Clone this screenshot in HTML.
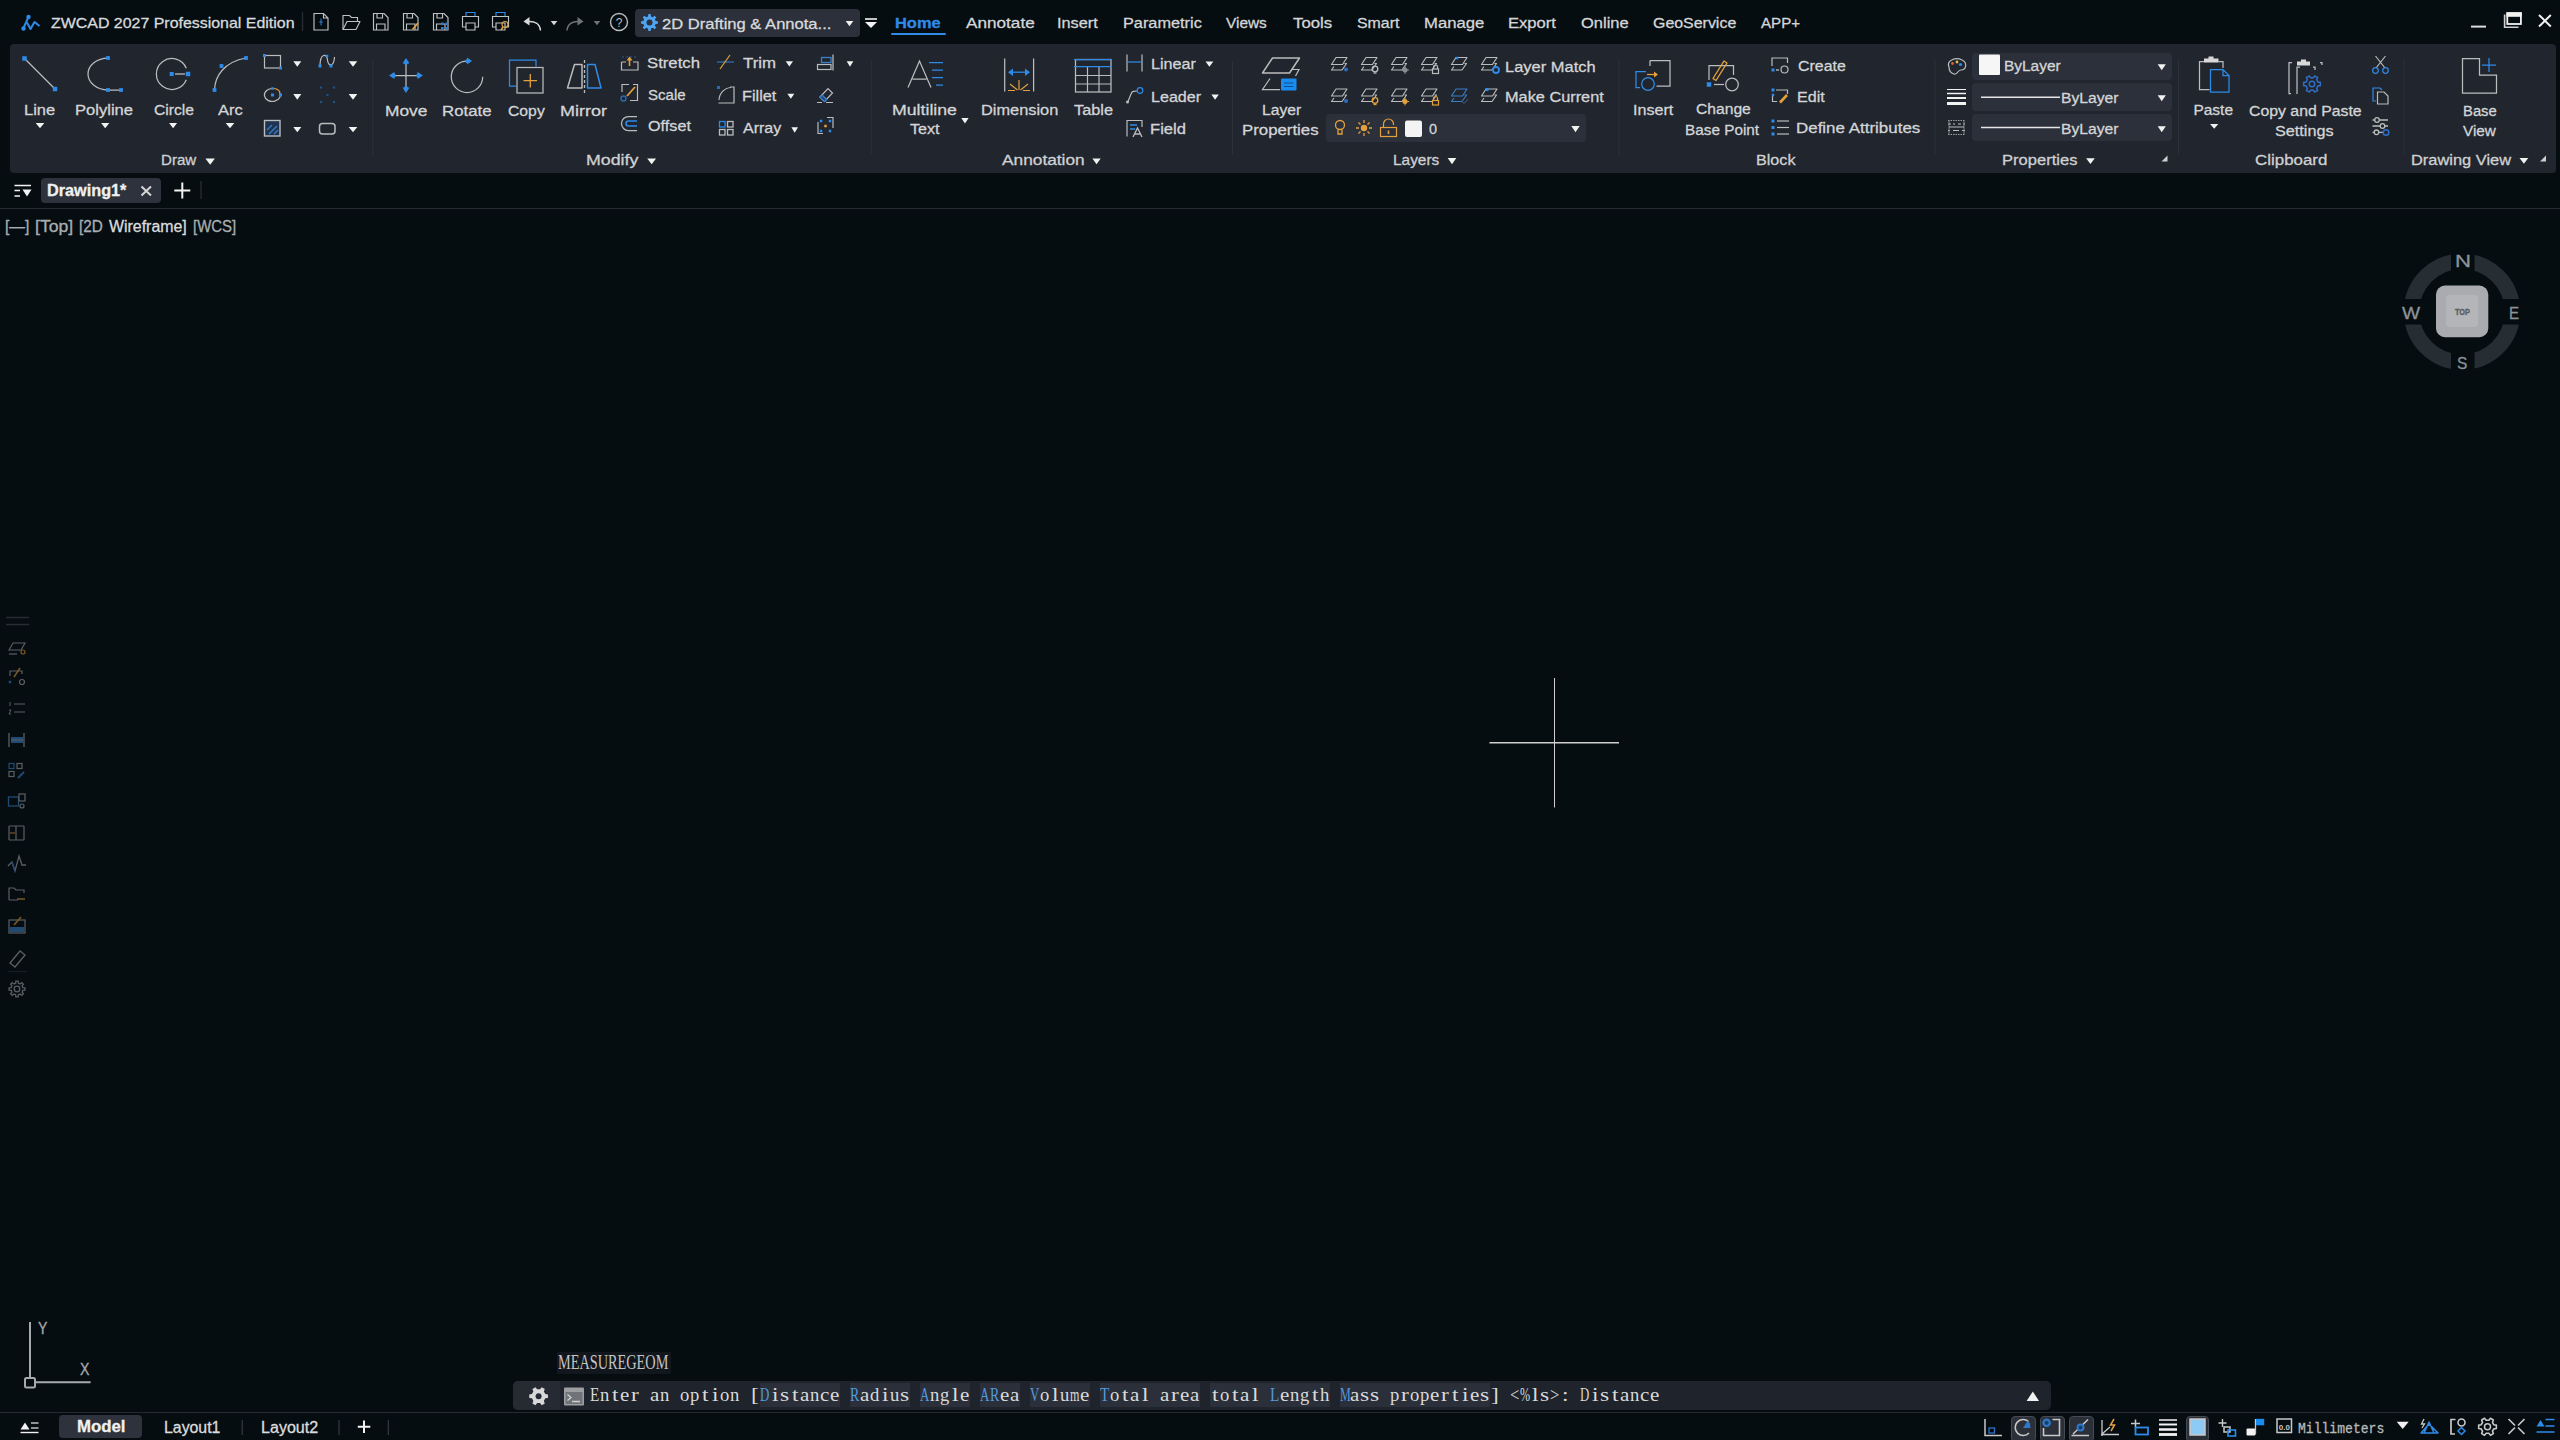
<!DOCTYPE html>
<html><head><meta charset="utf-8"><title>ZWCAD 2027</title>
<style>
html,body{margin:0;padding:0;}
body{width:2560px;height:1440px;overflow:hidden;background:#050d10;position:relative;font-family:"Liberation Sans",sans-serif;}
.t{position:absolute;white-space:pre;line-height:1;transform-origin:0 0;-webkit-text-stroke:0.3px currentColor;}
.bx{position:absolute;}
.ob{position:absolute;top:1383px;height:24px;background:#2a2f39;}
.cc{position:absolute;white-space:pre;line-height:1;font-family:"Liberation Serif",serif;font-size:19.5px;color:#d9d9d9;transform:scaleX(0.8);transform-origin:0 0;}
svg{position:absolute;left:0;top:0;}

</style></head><body>
<div class="bx" style="left:10px;top:44px;width:2546px;height:129px;background:#21252d;border-radius:4px;"></div>
<div class="bx" style="left:635px;top:9px;width:225px;height:28px;background:#2c303a;border-radius:4px;"></div>
<div class="bx" style="left:891px;top:33px;width:55px;height:2px;background:#2f8ae8;border-radius:1px;"></div>
<div class="bx" style="left:1326px;top:114px;width:260px;height:28px;background:#2c303a;border-radius:4px;"></div>
<div class="bx" style="left:1972px;top:53px;width:200px;height:27px;background:#2c303a;border-radius:4px;"></div>
<div class="bx" style="left:1972px;top:83px;width:200px;height:28px;background:#2c303a;border-radius:4px;"></div>
<div class="bx" style="left:1972px;top:114px;width:200px;height:27px;background:#2c303a;border-radius:4px;"></div>
<div class="bx" style="left:41px;top:178px;width:120px;height:25px;background:#2d323c;border-radius:4px;"></div>
<div class="bx" style="left:0;top:208px;width:2560px;height:1px;background:#262b31;"></div>
<div class="bx" style="left:557px;top:1352px;width:114px;height:22px;background:#12171d;"></div>
<div class="bx" style="left:513px;top:1381px;width:1538px;height:29px;background:#1f232b;border-radius:5px;"></div>
<div class="bx" style="left:513px;top:1381px;width:47px;height:29px;background:#262a33;border-radius:5px 0 0 5px;"></div>
<div class="bx" style="left:0;top:1412px;width:2560px;height:1px;background:#242a2f;"></div>
<div class="bx" style="left:59px;top:1415px;width:83px;height:23px;background:#2d323c;border-radius:4px;"></div>
<div class="bx" style="left:2011px;top:1415.5px;width:25px;height:26px;box-sizing:border-box;background:#2b2f37;border:1.5px solid #454a53;border-radius:4px;"></div>
<div class="bx" style="left:2040px;top:1415.5px;width:25px;height:26px;box-sizing:border-box;background:#2b2f37;border:1.5px solid #454a53;border-radius:4px;"></div>
<div class="bx" style="left:2069px;top:1415.5px;width:25px;height:26px;box-sizing:border-box;background:#2b2f37;border:1.5px solid #454a53;border-radius:4px;"></div>
<div class="bx" style="left:2186px;top:1415.5px;width:23px;height:26px;box-sizing:border-box;background:#2b2f37;border:1.5px solid #454a53;border-radius:4px;"></div>

<svg width="2560" height="1440" viewBox="0 0 2560 1440" stroke-linecap="butt"><path d="M28.5 17 L23.5 28" stroke="#2f8be8" stroke-width="2" fill="none" /><circle cx="28.5" cy="17" r="2.2" stroke="none" stroke-width="0" fill="#2f8be8" /><circle cx="23.5" cy="28.5" r="2.2" stroke="none" stroke-width="0" fill="#2f8be8" /><path d="M27 22.5 L30.5 29 L34.5 22 L39.5 26" stroke="#2f8be8" stroke-width="2" fill="none" stroke-linejoin="round"/><path d="M302.5 12 V31" stroke="#262b31" stroke-width="1.5" fill="none" /><path d="M314 13.5 H323.5 L328 18 V30 H314 Z M323.5 13.5 V18 H328" stroke="#bfc0c2" stroke-width="1.15" fill="none" /><path d="M321 18.5 V25.5 M319.2 22 H322.8" stroke="#2f7fd8" stroke-width="1" fill="none" /><path d="M343 29.5 V15.5 H349.5 L351.5 17.5 H357.5 V21" stroke="#bfc0c2" stroke-width="1.15" fill="none" /><path d="M343 29.5 L347 21.5 H360 L356 29.5 Z" stroke="#bfc0c2" stroke-width="1.15" fill="none" stroke-linejoin="round"/><path d="M373.5 13.5 H384.0 L388.0 17.5 V30 H373.5 Z" stroke="#bfc0c2" stroke-width="1.15" fill="none" /><path d="M377.0 13.5 V18 H382.5 V13.5 M376.5 30 V24 H385.0 V30" stroke="#bfc0c2" stroke-width="1.15" fill="none" /><path d="M403.5 13.5 H414.0 L418.0 17.5 V30 H403.5 Z" stroke="#bfc0c2" stroke-width="1.15" fill="none" /><path d="M407.0 13.5 V18 H412.5 V13.5 M406.5 30 V24 H415.0 V30" stroke="#bfc0c2" stroke-width="1.15" fill="none" /><path d="M412.5 29.5 L418.0 23" stroke="#e3a13c" stroke-width="1.8" fill="none" /><path d="M433.5 13.5 H444.0 L448.0 17.5 V30 H433.5 Z" stroke="#bfc0c2" stroke-width="1.15" fill="none" /><path d="M437.0 13.5 V18 H442.5 V13.5 M436.5 30 V24 H445.0 V30" stroke="#bfc0c2" stroke-width="1.15" fill="none" /><rect x="441.0" y="22.5" width="2.6" height="2.6" rx="0" fill="#2f7fd8"/><rect x="441.0" y="27.0" width="2.6" height="2.6" rx="0" fill="#2f7fd8"/><rect x="445.5" y="22.5" width="2.6" height="2.6" rx="0" fill="#2f7fd8"/><rect x="445.5" y="27.0" width="2.6" height="2.6" rx="0" fill="#2f7fd8"/><path d="M466 16 V12.5 H475 V16" stroke="#2f8be8" stroke-width="1.15" fill="none" /><path d="M466 27 H462.5 V16.5 H478.5 V27 H475" stroke="#bfc0c2" stroke-width="1.15" fill="none" /><path d="M466 23 H475 V30 H466 Z" stroke="#bfc0c2" stroke-width="1.15" fill="none" /><path d="M496 16 V12.5 H505 V16" stroke="#2f8be8" stroke-width="1.15" fill="none" /><path d="M496 27 H492.5 V16.5 H508.5 V27 H505" stroke="#bfc0c2" stroke-width="1.15" fill="none" /><path d="M496 23 H505 V30 H496 Z" stroke="#bfc0c2" stroke-width="1.15" fill="none" /><circle cx="505" cy="24.5" r="3" stroke="#e3a13c" stroke-width="1.15" fill="none" /><path d="M503 27 L501 30" stroke="#e3a13c" stroke-width="1.6" fill="none" /><path d="M528 21.5 C535 21 540 24 540.5 30.5" stroke="#d8d8d8" stroke-width="1.5" fill="none" /><path d="M523.5 21.5 L529.5 17 L529.5 25.5 Z" fill="#d8d8d8"/><path d="M550.7 21 H557.3 L554.0 25.3 Z" fill="#d8d8d8"/><path d="M579 21.5 C572.5 21 567.5 24 567 30.5" stroke="#6f7377" stroke-width="1.5" fill="none" /><path d="M583.5 21.5 L577.5 17 L577.5 25.5 Z" fill="#6f7377"/><path d="M593.7 21 H600.3 L597.0 25.3 Z" fill="#6f7377"/><circle cx="619" cy="22" r="8.5" stroke="#babcbe" stroke-width="1.4" fill="none" /><text x="619" y="26.5" font-family="Liberation Sans" font-size="12" font-weight="normal" fill="#babcbe" text-anchor="middle">?</text><path d="M655.62 21.03 L657.92 21.30 L657.92 23.70 L655.62 23.97 L654.86 25.79 L656.30 27.60 L654.60 29.30 L652.79 27.86 L650.97 28.62 L650.70 30.92 L648.30 30.92 L648.03 28.62 L646.21 27.86 L644.40 29.30 L642.70 27.60 L644.14 25.79 L643.38 23.97 L641.08 23.70 L641.08 21.30 L643.38 21.03 L644.14 19.21 L642.70 17.40 L644.40 15.70 L646.21 17.14 L648.03 16.38 L648.30 14.08 L650.70 14.08 L650.97 16.38 L652.79 17.14 L654.60 15.70 L656.30 17.40 L654.86 19.21 Z" fill="#4ea4f0"/><circle cx="649.5" cy="22.5" r="3" stroke="none" stroke-width="0" fill="#2c303a" /><path d="M845.7 21 H853.3 L849.5 26.3 Z" fill="#f2f2f2"/><path d="M865 19 H877" stroke="#f2f2f2" stroke-width="1.6" fill="none" /><path d="M865 22 H877 L871 28 Z" fill="#f2f2f2"/><path d="M2471 26.6 H2486" stroke="#dcdcdc" stroke-width="2" fill="none" /><rect x="2507.3" y="13.2" width="13.6" height="10.8" rx="0" stroke="#f2f2f2" stroke-width="1.8" fill="none"/><rect x="2506.4" y="12.3" width="15.4" height="4.5" rx="0" fill="#f2f2f2"/><path d="M2504.6 14.5 V27.2 H2518.5" stroke="#cfcfcf" stroke-width="1.6" fill="none" /><path d="M2539 15 L2550.8 26.5 M2550.8 15 L2539 26.5" stroke="#f2f2f2" stroke-width="2" fill="none" /><path d="M372.8 60 V155" stroke="#2c3138" stroke-width="1" fill="none" /><path d="M871.7 60 V154" stroke="#2c3138" stroke-width="1" fill="none" /><path d="M1232.5 61 V155" stroke="#2c3138" stroke-width="1" fill="none" /><path d="M1619 59.5 V155" stroke="#2c3138" stroke-width="1" fill="none" /><path d="M1935 59 V154" stroke="#2c3138" stroke-width="1" fill="none" /><path d="M2178.5 59 V154" stroke="#2c3138" stroke-width="1" fill="none" /><path d="M2404 59 V154" stroke="#2c3138" stroke-width="1" fill="none" /><path d="M24.5 58.5 L55 89" stroke="#babcbe" stroke-width="1.25" fill="none" /><rect x="22.25" y="56.25" width="4.5" height="4.5" rx="0" fill="#2f8be8"/><rect x="52.75" y="86.75" width="4.5" height="4.5" rx="0" fill="#2f8be8"/><path d="M35.7 123 H44.3 L40.0 128.3 Z" fill="#f2f2f2"/><path d="M108 58 A20 16 0 0 0 108 90 L121 90" stroke="#babcbe" stroke-width="1.25" fill="none" /><rect x="106.1" y="56.1" width="3.8" height="3.8" rx="0" fill="#2f8be8"/><rect x="106.1" y="88.1" width="3.8" height="3.8" rx="0" fill="#2f8be8"/><rect x="119.1" y="88.1" width="3.8" height="3.8" rx="0" fill="#2f8be8"/><path d="M101.10000000000001 123 H109.3 L105.2 128.3 Z" fill="#f2f2f2"/><path d="M186.3 68.3 A15.5 15.5 0 1 0 186.3 79.7" stroke="#babcbe" stroke-width="1.25" fill="none" /><path d="M175 74 H185" stroke="#babcbe" stroke-width="1.3" fill="none" /><rect x="169.7" y="72.0" width="4" height="4" rx="0" fill="#2f8be8"/><rect x="185.75" y="71.75" width="4.5" height="4.5" rx="0" fill="#2f8be8"/><path d="M169.1 123 H177.10000000000002 L173.10000000000002 128.3 Z" fill="#f2f2f2"/><path d="M214.5 90 C215 76 224 62 246 58" stroke="#babcbe" stroke-width="1.25" fill="none" /><rect x="212.6" y="88.1" width="3.8" height="3.8" rx="0" fill="#2f8be8"/><rect x="219.6" y="64.1" width="3.8" height="3.8" rx="0" fill="#2f8be8"/><rect x="244.1" y="56.1" width="3.8" height="3.8" rx="0" fill="#2f8be8"/><path d="M225.7 123 H234.3 L230.0 128.3 Z" fill="#f2f2f2"/><rect x="264.5" y="55.5" width="16" height="12.5" rx="0" stroke="#babcbe" stroke-width="1.2" fill="none"/><rect x="263.0" y="54.0" width="3" height="3" rx="0" fill="#2f8be8"/><rect x="279.0" y="66.5" width="3" height="3" rx="0" fill="#2f8be8"/><path d="M293.3 61.3 H301.3 L297.3 66.8 Z" fill="#f2f2f2"/><path d="M320 66 C320 53 327 53 327.5 60 C328 67 334 67 334.5 57" stroke="#babcbe" stroke-width="1.2" fill="none" /><rect x="318.5" y="64.5" width="3" height="3" rx="0" fill="#2f8be8"/><rect x="325.75" y="54.75" width="2.5" height="2.5" rx="0" fill="#2f8be8"/><rect x="329.5" y="64.5" width="3" height="3" rx="0" fill="#2f8be8"/><path d="M348.7 61.3 H357.3 L353.0 66.8 Z" fill="#f2f2f2"/><path d="M279.5 92 A8 6.5 0 1 1 273 88.5" stroke="#babcbe" stroke-width="1.2" fill="none" /><path d="M273.5 88.5 A8 6.5 0 0 1 280 92" stroke="#e3a13c" stroke-width="1.2" fill="none" /><rect x="271.0" y="93.5" width="3" height="3" rx="0" fill="#2f8be8"/><rect x="279.0" y="93.5" width="3" height="3" rx="0" fill="#2f8be8"/><rect x="271.25" y="87.25" width="2.5" height="2.5" rx="0" fill="#2f8be8"/><path d="M293.3 94 H301.3 L297.3 99.8 Z" fill="#f2f2f2"/><rect x="319.9" y="86.4" width="2.2" height="2.2" rx="0" fill="#1f4f86"/><rect x="332.9" y="86.4" width="2.2" height="2.2" rx="0" fill="#1f4f86"/><rect x="326.4" y="93.9" width="2.2" height="2.2" rx="0" fill="#1f4f86"/><rect x="319.9" y="100.9" width="2.2" height="2.2" rx="0" fill="#1f4f86"/><rect x="332.9" y="100.9" width="2.2" height="2.2" rx="0" fill="#1f4f86"/><path d="M348.7 94 H357.3 L353.0 99.8 Z" fill="#f2f2f2"/><rect x="264.5" y="120.5" width="15.5" height="15.5" rx="0" stroke="#babcbe" stroke-width="1.4" fill="#1d3350"/><path d="M267 130 L272 125 M269 134 L277 126 M274 134 L278 130" stroke="#3a7fc8" stroke-width="1.3" fill="none" /><path d="M293.3 127 H301.3 L297.3 132.3 Z" fill="#f2f2f2"/><rect x="319.5" y="123.5" width="15.5" height="10.5" rx="3" stroke="#babcbe" stroke-width="1.5" fill="none"/><path d="M348.7 127 H357.3 L353.0 132.3 Z" fill="#f2f2f2"/><path d="M406 62 V89 M393 75.5 H419" stroke="#babcbe" stroke-width="1.25" fill="none" /><path d="M406 58 L402.5 63.5 H409.5 Z M406 93 L402.5 87.5 H409.5 Z M389 75.5 L394.5 72 V79 Z M423 75.5 L417.5 72 V79 Z" fill="#2f8be8"/><circle cx="406" cy="62.5" r="2.2" stroke="none" stroke-width="0" fill="#2f8be8" /><circle cx="406" cy="88.5" r="2.2" stroke="none" stroke-width="0" fill="#2f8be8" /><circle cx="393.5" cy="75.5" r="2.2" stroke="none" stroke-width="0" fill="#2f8be8" /><circle cx="418.5" cy="75.5" r="2.2" stroke="none" stroke-width="0" fill="#2f8be8" /><path d="M467 61.1 A15.7 15.7 0 1 0 482.7 76.8" stroke="#babcbe" stroke-width="1.25" fill="none" /><path d="M472 61 L467 57.5 L467 64.5 Z" fill="#2f8be8"/><circle cx="467.5" cy="61.1" r="2.2" stroke="none" stroke-width="0" fill="#2f8be8" /><path d="M536 66.5 V60 H509.5 V86 H516" stroke="#2f8be8" stroke-width="1.25" fill="none" /><rect x="517" y="67.5" width="26" height="25.5" rx="0" stroke="#babcbe" stroke-width="1.25" fill="none"/><path d="M530.3 74 V87.5 M523.5 80.6 H537" stroke="#e3a13c" stroke-width="1.3" fill="none" /><path d="M567.5 88 L574.5 64.5 H582 V88 Z" stroke="#babcbe" stroke-width="1.5" fill="none" stroke-linejoin="round"/><path d="M587.5 64.5 H595 L601 88 H587.5 Z" stroke="#2f8be8" stroke-width="1.5" fill="none" stroke-linejoin="round"/><path d="M584.5 60 V95" stroke="#babcbe" stroke-width="1.3" fill="none" stroke-dasharray="3 2"/><path d="M621.5 62 V70 H638 V62 H633 M626 62 H621.5" stroke="#babcbe" stroke-width="1.2" fill="none" /><path d="M622 57 H638" stroke="#2a5a90" stroke-width="1.2" fill="none" stroke-dasharray="2 2"/><path d="M629.5 66 V59" stroke="#e3a13c" stroke-width="1.6" fill="none" /><path d="M629.5 56.5 L626.5 60.5 H632.5 Z" fill="#e3a13c"/><path d="M622 92 V84.5 H629 M633 84.5 H637.5 V100.5 H630" stroke="#babcbe" stroke-width="1.2" fill="none" /><path d="M627 96 L635 87" stroke="#e3a13c" stroke-width="1.8" fill="none" /><circle cx="623.5" cy="98.5" r="2.5" stroke="#2a6ab0" stroke-width="1.4" fill="none" /><path d="M637 116.5 H628.5 A7 7 0 0 0 628.5 130.5 H637" stroke="#babcbe" stroke-width="1.25" fill="none" /><path d="M637 121 H628.5 A2.5 2.5 0 0 0 628.5 126 H637" stroke="#2f8be8" stroke-width="1.6" fill="none" /><path d="M717 62 H734" stroke="#2c6cb0" stroke-width="1.3" fill="none" /><path d="M720 69 L730 55" stroke="#e3a13c" stroke-width="1.25" fill="none" /><path d="M785.7 61.3 H793.0 L789.35 66.6 Z" fill="#f2f2f2"/><path d="M718.5 103 H734 V87 H730" stroke="#babcbe" stroke-width="1.2" fill="none" /><path d="M719 100 A13 13 0 0 1 731 87.5" stroke="#babcbe" stroke-width="1.2" fill="none" /><rect x="717.0" y="86.0" width="3" height="3" rx="0" fill="#2a6ab0"/><path d="M787.4000000000001 93.7 H794.3 L790.85 98.8 Z" fill="#f2f2f2"/><rect x="719.5" y="121.5" width="5.5" height="5.5" rx="0" stroke="#2f8be8" stroke-width="1.3" fill="none"/><rect x="727.5" y="121.5" width="5.5" height="5.5" rx="0" stroke="#babcbe" stroke-width="1.3" fill="none"/><rect x="719.5" y="129.5" width="5.5" height="5.5" rx="0" stroke="#babcbe" stroke-width="1.3" fill="none"/><rect x="727.5" y="129.5" width="5.5" height="5.5" rx="0" stroke="#babcbe" stroke-width="1.3" fill="none"/><path d="M791.4000000000001 127.3 H798.0 L794.7 132.8 Z" fill="#f2f2f2"/><path d="M833 54.5 V70.5" stroke="#babcbe" stroke-width="1.25" fill="none" /><rect x="821.5" y="57.5" width="9.5" height="5" rx="0" stroke="#3a7fc8" stroke-width="1.3" fill="none"/><rect x="817.5" y="64.5" width="13.5" height="5" rx="0" stroke="#babcbe" stroke-width="1.2" fill="none"/><path d="M846.7 61.3 H853.3 L850.0 66.8 Z" fill="#f2f2f2"/><path d="M820 97 L828 88.5 L832.5 93 L824.5 101.5 Z" stroke="#babcbe" stroke-width="1.2" fill="none" /><path d="M820 97 L824.5 101.5 L826.5 99.5 L822 95 Z" stroke="#3a7fc8" stroke-width="1.4" fill="#1e3b5e" /><path d="M817 102.5 H822 M826 102.5 H833" stroke="#babcbe" stroke-width="1.2" fill="none" /><path d="M818 122 V133.5 H823 M827 117.5 H833 V128" stroke="#babcbe" stroke-width="1.2" fill="none" /><rect x="819.75" y="119.75" width="2.5" height="2.5" rx="0" fill="#2f8be8"/><rect x="828.75" y="119.75" width="2.5" height="2.5" rx="0" fill="#2f8be8"/><rect x="819.75" y="129.75" width="2.5" height="2.5" rx="0" fill="#2f8be8"/><rect x="828.75" y="129.75" width="2.5" height="2.5" rx="0" fill="#2f8be8"/><rect x="824.25" y="124.75" width="2.5" height="2.5" rx="0" fill="#e3a13c"/><path d="M908 87.5 L919.5 61 L931 87.5 M912.5 79 H926.5" stroke="#babcbe" stroke-width="1.25" fill="none" /><path d="M929 62.5 H943 M932 70 H943 M932 77.5 H943 M936 85 H943" stroke="#2f8be8" stroke-width="1.25" fill="none" /><path d="M961.3000000000001 118 H968.5999999999999 L964.95 123.39999999999999 Z" fill="#f2f2f2"/><path d="M1004.7 58.5 V91.5 M1033.6 58.5 V91.5" stroke="#babcbe" stroke-width="1.25" fill="none" /><path d="M1012 72.2 H1026" stroke="#2f8be8" stroke-width="1.3" fill="none" /><path d="M1008 72.2 L1013 68.5 V76 Z M1030 72.2 L1025 68.5 V76 Z" fill="#2f8be8"/><path d="M1019 90 V80 M1017.5 90 L1010 84 M1020.5 90 L1028 84 M1008 90.5 H1015 M1023 90.5 H1030" stroke="#e3a13c" stroke-width="1.2" fill="none" /><rect x="1075.5" y="59.5" width="35.5" height="32.5" rx="0" stroke="#babcbe" stroke-width="1.25" fill="none"/><path d="M1075.5 66.5 H1111 M1075.5 75.5 H1111 M1075.5 84 H1111 M1087.5 66.5 V92 M1099 66.5 V92" stroke="#babcbe" stroke-width="1.2" fill="none" /><path d="M1074 59.5 H1112 M1074 66.5 H1112" stroke="#2f8be8" stroke-width="1.25" fill="none" /><path d="M1127 54.5 V71.5 M1142 54.5 V71.5" stroke="#babcbe" stroke-width="1.2" fill="none" /><path d="M1127 62 H1142" stroke="#2f8be8" stroke-width="1.2" fill="none" /><path d="M1205.5 61.5 H1213.3 L1209.4 66.8 Z" fill="#f2f2f2"/><path d="M1128 101.5 L1131 94 C1132 91 1134 91 1137.5 91" stroke="#babcbe" stroke-width="1.2" fill="none" /><circle cx="1127.5" cy="102" r="1.5" stroke="none" stroke-width="0" fill="#babcbe" /><circle cx="1140" cy="90.5" r="2.8" stroke="#2f8be8" stroke-width="1.2" fill="none" /><path d="M1211.4 94.5 H1218.8 L1215.1 99.8 Z" fill="#f2f2f2"/><path d="M1127 136.5 V120.5 H1142 V127" stroke="#babcbe" stroke-width="1.2" fill="none" /><path d="M1130 125 H1137 M1130 129 H1135" stroke="#2f8be8" stroke-width="1.3" fill="none" /><path d="M1133 137 L1137.5 128 L1142 137 M1134.5 134 H1140.5" stroke="#babcbe" stroke-width="1.3" fill="none" /><path d="M1262.5 73 L1272.5 58 H1299.5 L1289.5 73 Z" stroke="#babcbe" stroke-width="1.5" fill="none" stroke-linejoin="round"/><path d="M1280 89.5 H1262.5 L1270 78.5" stroke="#babcbe" stroke-width="1.25" fill="none" /><path d="M1292 69.5 H1299 L1295.5 76" stroke="#babcbe" stroke-width="1.2" fill="none" /><rect x="1281" y="78.5" width="15.5" height="12" rx="1" fill="#1a8cf0"/><path d="M1284 83 H1293.5 M1284 86.5 H1293.5" stroke="#0c4f90" stroke-width="1.2" fill="none" /><path d="M1331.5 64.5 L1336 57.5 H1347 L1342.5 64.5 Z" stroke="#babcbe" stroke-width="1.15" fill="none" stroke-linejoin="round"/><path d="M1334 66.5 L1331.5 70.0 H1342 L1346.5 63.5 H1344.5" stroke="#babcbe" stroke-width="1.15" fill="none" stroke-linejoin="round"/><circle cx="1346" cy="69.5" r="2" stroke="none" stroke-width="0" fill="#2a70c0" /><path d="M1361.5 64.5 L1366 57.5 H1377 L1372.5 64.5 Z" stroke="#babcbe" stroke-width="1.15" fill="none" stroke-linejoin="round"/><path d="M1364 66.5 L1361.5 70.0 H1372 L1376.5 63.5 H1374.5" stroke="#babcbe" stroke-width="1.15" fill="none" stroke-linejoin="round"/><circle cx="1375" cy="69.0" r="2.8" stroke="#babcbe" stroke-width="1.3" fill="none" /><path d="M1373.5 73.0 H1376.5" stroke="#babcbe" stroke-width="1.3" fill="none" /><path d="M1391.5 64.5 L1396 57.5 H1407 L1402.5 64.5 Z" stroke="#babcbe" stroke-width="1.15" fill="none" stroke-linejoin="round"/><path d="M1394 66.5 L1391.5 70.0 H1402 L1406.5 63.5 H1404.5" stroke="#babcbe" stroke-width="1.15" fill="none" stroke-linejoin="round"/><circle cx="1405" cy="70.0" r="2.5" stroke="none" stroke-width="0" fill="#8a8c8e" /><path d="M1405 66.0 V74.0 M1401 70.0 H1409" stroke="#8a8c8e" stroke-width="1" fill="none" /><path d="M1421.5 64.5 L1426 57.5 H1437 L1432.5 64.5 Z" stroke="#babcbe" stroke-width="1.15" fill="none" stroke-linejoin="round"/><path d="M1424 66.5 L1421.5 70.0 H1432 L1436.5 63.5 H1434.5" stroke="#babcbe" stroke-width="1.15" fill="none" stroke-linejoin="round"/><rect x="1432.5" y="69.0" width="6" height="4.5" rx="0" stroke="#babcbe" stroke-width="1.2" fill="none"/><path d="M1433.5 69.0 V67.0 A2 2 0 0 1 1437.5 67.0 V69.0" stroke="#babcbe" stroke-width="1.2" fill="none" /><path d="M1451.5 64.5 L1456 57.5 H1467 L1462.5 64.5 Z" stroke="#babcbe" stroke-width="1.15" fill="none" stroke-linejoin="round"/><path d="M1454 66.5 L1451.5 70.0 H1462 L1466.5 63.5 H1464.5" stroke="#babcbe" stroke-width="1.15" fill="none" stroke-linejoin="round"/><rect x="1455.75" y="56.75" width="2.5" height="2.5" rx="0" fill="#2f8be8"/><path d="M1481.5 64.5 L1486 57.5 H1497 L1492.5 64.5 Z" stroke="#babcbe" stroke-width="1.15" fill="none" stroke-linejoin="round"/><path d="M1484 66.5 L1481.5 70.0 H1492 L1496.5 63.5 H1494.5" stroke="#babcbe" stroke-width="1.15" fill="none" stroke-linejoin="round"/><circle cx="1496" cy="70.0" r="3" stroke="#2f8be8" stroke-width="1.8" fill="none" /><path d="M1331.5 96 L1336 89 H1347 L1342.5 96 Z" stroke="#babcbe" stroke-width="1.15" fill="none" stroke-linejoin="round"/><path d="M1334 98 L1331.5 101.5 H1342 L1346.5 95 H1344.5" stroke="#babcbe" stroke-width="1.15" fill="none" stroke-linejoin="round"/><circle cx="1346" cy="101" r="2" stroke="none" stroke-width="0" fill="#2a70c0" /><path d="M1361.5 96 L1366 89 H1377 L1372.5 96 Z" stroke="#babcbe" stroke-width="1.15" fill="none" stroke-linejoin="round"/><path d="M1364 98 L1361.5 101.5 H1372 L1376.5 95 H1374.5" stroke="#babcbe" stroke-width="1.15" fill="none" stroke-linejoin="round"/><circle cx="1375" cy="100.5" r="2.8" stroke="#e3a13c" stroke-width="1.3" fill="none" /><path d="M1373.5 104.5 H1376.5" stroke="#e3a13c" stroke-width="1.3" fill="none" /><path d="M1391.5 96 L1396 89 H1407 L1402.5 96 Z" stroke="#babcbe" stroke-width="1.15" fill="none" stroke-linejoin="round"/><path d="M1394 98 L1391.5 101.5 H1402 L1406.5 95 H1404.5" stroke="#babcbe" stroke-width="1.15" fill="none" stroke-linejoin="round"/><circle cx="1405" cy="101.5" r="2.5" stroke="none" stroke-width="0" fill="#e3a13c" /><path d="M1405 97.5 V105.5 M1401 101.5 H1409" stroke="#e3a13c" stroke-width="1" fill="none" /><path d="M1421.5 96 L1426 89 H1437 L1432.5 96 Z" stroke="#babcbe" stroke-width="1.15" fill="none" stroke-linejoin="round"/><path d="M1424 98 L1421.5 101.5 H1432 L1436.5 95 H1434.5" stroke="#babcbe" stroke-width="1.15" fill="none" stroke-linejoin="round"/><rect x="1432.5" y="100.5" width="6" height="4.5" rx="0" stroke="#e3a13c" stroke-width="1.2" fill="none"/><path d="M1433.5 100.5 V98.5 A2 2 0 0 1 1437.5 98.5 V100.5" stroke="#e3a13c" stroke-width="1.2" fill="none" /><path d="M1451.5 96 L1456 89 H1467 L1462.5 96 Z" stroke="#3a7fc8" stroke-width="1.15" fill="none" stroke-linejoin="round"/><path d="M1454 98 L1451.5 101.5 H1462 L1466.5 95 H1464.5" stroke="#3a7fc8" stroke-width="1.15" fill="none" stroke-linejoin="round"/><path d="M1462 101.5 L1464 103.5 L1468 99.5" stroke="#3a4a5a" stroke-width="1.2" fill="none" /><path d="M1481.5 96 L1486 89 H1497 L1492.5 96 Z" stroke="#babcbe" stroke-width="1.15" fill="none" stroke-linejoin="round"/><path d="M1484 98 L1481.5 101.5 H1492 L1496.5 95 H1494.5" stroke="#babcbe" stroke-width="1.15" fill="none" stroke-linejoin="round"/><rect x="1485.5" y="88.0" width="3" height="3" rx="0" fill="#2f8be8"/><circle cx="1340" cy="125" r="4.5" stroke="#e3a13c" stroke-width="1.3" fill="none" /><path d="M1338 130 V134 H1342 V130" stroke="#e3a13c" stroke-width="1.3" fill="none" /><circle cx="1364" cy="128" r="3.2" stroke="none" stroke-width="0" fill="#e3a13c" /><path d="M1364 120 V123 M1364 133 V136 M1356 128 H1359 M1369 128 H1372 M1358.5 122.5 L1360.5 124.5 M1367.5 131.5 L1369.5 133.5 M1358.5 133.5 L1360.5 131.5 M1367.5 124.5 L1369.5 122.5" stroke="#e3a13c" stroke-width="1.3" fill="none" /><rect x="1380.5" y="127.5" width="16" height="9" rx="0" stroke="#e3a13c" stroke-width="1.2" fill="none"/><path d="M1383.5 127.5 V124 A5 5 0 0 1 1393.5 124 V125" stroke="#e3a13c" stroke-width="1.2" fill="none" /><path d="M1388.5 130.5 V134" stroke="#e3a13c" stroke-width="1.6" fill="none" /><rect x="1405" y="120.5" width="17" height="16.5" rx="2" fill="#f4f4f4"/><path d="M1571.3 126 H1579.7 L1575.5 132.3 Z" fill="#f2f2f2"/><path d="M1447.7 158 H1456.3 L1452.0 164.3 Z" fill="#f2f2f2"/><path d="M1650 60.5 H1670 V86 H1656.5" stroke="#babcbe" stroke-width="1.25" fill="none" /><path d="M1650 60.5 V66" stroke="#babcbe" stroke-width="1.25" fill="none" /><path d="M1646 71.5 H1636 V87.5 H1640" stroke="#2f8be8" stroke-width="1.25" fill="none" /><circle cx="1648" cy="84" r="6.3" stroke="#2f8be8" stroke-width="1.25" fill="none" /><path d="M1647 74.5 H1655" stroke="#e3a13c" stroke-width="1.25" fill="none" /><path d="M1658 74.5 L1654 71.5 V77.5 Z" fill="#e3a13c"/><path d="M1709 80 V65.5 H1733.5 V75" stroke="#babcbe" stroke-width="1.25" fill="none" /><path d="M1713 78.5 L1724 61 L1727 63 L1716 80.5 Z" stroke="#e3a13c" stroke-width="1.4" fill="none" stroke-linejoin="round"/><rect x="1706.75" y="82.25" width="4.5" height="4.5" rx="0" fill="#2f8be8"/><path d="M1714 84.5 H1724" stroke="#babcbe" stroke-width="1.25" fill="none" /><circle cx="1732" cy="84.5" r="6.3" stroke="#babcbe" stroke-width="1.25" fill="none" /><path d="M1772 66 V58 H1787.5 V63" stroke="#babcbe" stroke-width="1.2" fill="none" /><rect x="1771.5" y="68.5" width="3" height="3" rx="0" fill="#2f8be8"/><path d="M1776 70 H1779" stroke="#babcbe" stroke-width="1.3" fill="none" /><circle cx="1784.5" cy="69.5" r="3.5" stroke="#babcbe" stroke-width="1.2" fill="none" /><path d="M1772.5 96 V101.5 H1777 M1776 90 H1787.5 V94" stroke="#babcbe" stroke-width="1.2" fill="none" /><rect x="1771.5" y="88.5" width="3" height="3" rx="0" fill="#2f8be8"/><rect x="1771.75" y="93.75" width="2.5" height="2.5" rx="0" fill="#2f8be8"/><path d="M1780 102.5 L1787 95" stroke="#e3a13c" stroke-width="2.6" fill="none" /><rect x="1771.5" y="119.5" width="3" height="3" rx="0" fill="#2f8be8"/><path d="M1777 121 H1789" stroke="#babcbe" stroke-width="1.2" fill="none" /><rect x="1771.5" y="126.0" width="3" height="3" rx="0" fill="#2f8be8"/><path d="M1777 127.5 H1789" stroke="#babcbe" stroke-width="1.2" fill="none" /><rect x="1771.5" y="132.5" width="3" height="3" rx="0" fill="#2f8be8"/><path d="M1777 134 H1789" stroke="#babcbe" stroke-width="1.2" fill="none" /><path d="M1949 67 C1946 60 1956 57 1962 60 C1968 63 1966 70 1961 70 C1957 70 1958 75 1954 74 C1950 73 1949 70 1949 67 Z" stroke="#babcbe" stroke-width="1.2" fill="none" /><circle cx="1952.5" cy="63.5" r="1.4" stroke="none" stroke-width="0" fill="#e06030" /><circle cx="1957" cy="62" r="1.4" stroke="none" stroke-width="0" fill="#e0c050" /><circle cx="1960.5" cy="64.5" r="1.6" stroke="none" stroke-width="0" fill="#2f8be8" /><path d="M1947 89.5 H1966" stroke="#f2f2f2" stroke-width="1" fill="none" /><path d="M1947 93.5 H1966" stroke="#f2f2f2" stroke-width="1.5" fill="none" /><path d="M1947 98 H1966" stroke="#f2f2f2" stroke-width="2" fill="none" /><path d="M1947 103.5 H1966" stroke="#f2f2f2" stroke-width="3" fill="none" /><path d="M1948 120.5 H1965 M1948 134.5 H1965" stroke="#9a9c9e" stroke-width="1" fill="none" stroke-dasharray="1.5 1"/><path d="M1948 124 H1951 M1953 124 H1955 M1958 124 H1961 M1963 124 H1965 M1949 127 H1964 M1948 130.5 H1950 M1953 130.5 H1959 M1962 130.5 H1965" stroke="#babcbe" stroke-width="1.2" fill="none" /><path d="M1949 121 V134 M1964 121 V134" stroke="#9a9c9e" stroke-width="0.8" fill="none" /><rect x="1979" y="54.5" width="21" height="20.5" rx="1" fill="#f6f6f6"/><path d="M1981 97.3 H2060" stroke="#e6e6e6" stroke-width="1.4" fill="none" /><path d="M1981 127.5 H2060" stroke="#e6e6e6" stroke-width="1.4" fill="none" /><path d="M2157.7 64.3 H2165.8 L2161.75 70.2 Z" fill="#f2f2f2"/><path d="M2157.7 95.3 H2165.8 L2161.75 101.2 Z" fill="#f2f2f2"/><path d="M2157.7 126.3 H2165.8 L2161.75 132.20000000000002 Z" fill="#f2f2f2"/><path d="M2086.1 158.2 H2094.8 L2090.45 164.10000000000002 Z" fill="#f2f2f2"/><path d="M2167.5 155.5 V161.5 H2161.5 Z" fill="#cfcfcf"/><path d="M2204 61.5 H2199.5 V89.5 H2209.5 M2218.5 61.5 H2223 V68" stroke="#babcbe" stroke-width="1.25" fill="none" /><path d="M2204 62.5 V58.5 H2208.5 V56.5 H2213.5 V58.5 H2218.5 V62.5 Z" fill="#d8d8d8"/><path d="M2210.5 69.5 H2223 L2229 75.5 V92 H2210.5 Z M2223 69.5 V75.5 H2229" stroke="#2f8be8" stroke-width="1.25" fill="none" /><path d="M2210.1 124 H2218.3 L2214.2 128.8 Z" fill="#f2f2f2"/><path d="M2292 62.5 H2289 V93.5 H2291" stroke="#babcbe" stroke-width="1.25" fill="none" /><path d="M2297 94 V67 H2300 M2313 67 H2315 V70" stroke="#babcbe" stroke-width="1.25" fill="none" /><path d="M2320 62.5 H2322 V65" stroke="#babcbe" stroke-width="1.25" fill="none" /><path d="M2297 65.5 V61.5 H2301 V59.5 H2306 V61.5 H2310 V65.5 Z" fill="#d8d8d8"/><path d="M2317.98 82.06 L2320.35 82.41 L2320.35 85.59 L2317.98 85.94 L2316.67 88.21 L2317.55 90.43 L2314.80 92.03 L2313.31 90.15 L2310.69 90.15 L2309.20 92.03 L2306.45 90.43 L2307.33 88.21 L2306.02 85.94 L2303.65 85.59 L2303.65 82.41 L2306.02 82.06 L2307.33 79.79 L2306.45 77.57 L2309.20 75.97 L2310.69 77.85 L2313.31 77.85 L2314.80 75.97 L2317.55 77.57 L2316.67 79.79 Z" fill="none" stroke="#2f6fc8" stroke-width="1.5"/><circle cx="2312" cy="84" r="2.8" stroke="#2f6fc8" stroke-width="1.4" fill="none" /><path d="M2375.5 56 L2385 68 M2385.5 56 L2376 68" stroke="#babcbe" stroke-width="1.2" fill="none" /><circle cx="2375.5" cy="70.5" r="2.8" stroke="#2f8be8" stroke-width="1.2" fill="none" /><circle cx="2385.5" cy="70.5" r="2.8" stroke="#2f8be8" stroke-width="1.2" fill="none" /><path d="M2376 101 H2373 V88 H2380 L2382 90" stroke="#2f8be8" stroke-width="1.2" fill="none" /><path d="M2377.5 92 H2384 L2388 96 V104 H2377.5 Z" stroke="#babcbe" stroke-width="1.2" fill="none" /><path d="M2372.5 120 H2388 M2372.5 126 H2388 M2372.5 132.3 H2383" stroke="#babcbe" stroke-width="1.3" fill="none" /><circle cx="2377" cy="120" r="2.3" stroke="#babcbe" stroke-width="1.3" fill="#21252d" /><circle cx="2382.5" cy="126" r="2.3" stroke="#babcbe" stroke-width="1.3" fill="#21252d" /><circle cx="2376.5" cy="132.3" r="2.3" stroke="#babcbe" stroke-width="1.3" fill="#21252d" /><circle cx="2386" cy="132.5" r="2.8" stroke="#2f6fc8" stroke-width="1.6" fill="#21252d" /><path d="M2462.5 58.5 H2479.5 V75 H2496.5 V93 H2462.5 Z" stroke="#babcbe" stroke-width="1.25" fill="none" /><path d="M2489 58 V72 M2482 65 H2496" stroke="#2f8be8" stroke-width="1.25" fill="none" /><path d="M2519.5 158 H2528.3 L2523.9 163.8 Z" fill="#f2f2f2"/><path d="M2546 155.5 V161.5 H2540 Z" fill="#cfcfcf"/><path d="M205.39999999999998 158.5 H214.9 L210.14999999999998 164.8 Z" fill="#f2f2f2"/><path d="M647.2 158.5 H656.0999999999999 L651.65 164.3 Z" fill="#f2f2f2"/><path d="M1092.4 158.5 H1100.7 L1096.5500000000002 164.3 Z" fill="#f2f2f2"/><path d="M14.5 185.5 H31 M14.5 190.5 H20 M14.5 196 H20" stroke="#f2f2f2" stroke-width="1.4" fill="none" /><path d="M22.5 189.5 H31.5 L27 196.5 Z" fill="#f2f2f2"/><path d="M141.5 186.5 L151 195.5 M151 186.5 L141.5 195.5" stroke="#d6d6d6" stroke-width="2" fill="none" /><path d="M182.3 182.5 V198.5 M174.3 190.5 H190.3" stroke="#f2f2f2" stroke-width="2" fill="none" /><path d="M201 181 V199" stroke="#2a2f35" stroke-width="1.2" fill="none" /><path d="M6 617.5 H29 M6 624.5 H29" stroke="#262c32" stroke-width="1.5" fill="none" /><path d="M9 650 L13 643 H25 L21 650 Z" stroke="#5b5f64" stroke-width="1.2" fill="none" /><path d="M9 654 H17" stroke="#5b5f64" stroke-width="1.2" fill="none" /><circle cx="23" cy="652" r="2" stroke="#7a5628" stroke-width="1.2" fill="none" /><path d="M10 676 V671 H22 V674" stroke="#5b5f64" stroke-width="1.2" fill="none" /><path d="M14 677 L20 668" stroke="#7a5628" stroke-width="1.5" fill="none" /><circle cx="22" cy="682" r="2.5" stroke="#5b5f64" stroke-width="1.2" fill="none" /><rect x="8.75" y="680.75" width="2.5" height="2.5" rx="0" fill="#214a72"/><path d="M14 704 H25 M14 712 H25" stroke="#5b5f64" stroke-width="1.2" fill="none" /><path d="M10 702 V706 M9 710 H11 L9 714 H11" stroke="#5b5f64" stroke-width="1" fill="none" /><path d="M9 733 V747 M24 733 V747" stroke="#5b5f64" stroke-width="1.3" fill="none" /><rect x="11" y="737" width="12" height="6" rx="0" fill="#214a72"/><path d="M11 740 H23" stroke="#5b5f64" stroke-width="1" fill="none" /><rect x="9" y="763.5" width="5" height="5" rx="0" stroke="#214a72" stroke-width="1.2" fill="none"/><rect x="17" y="763.5" width="5" height="5" rx="0" stroke="#5b5f64" stroke-width="1.2" fill="none"/><rect x="9" y="771.5" width="5" height="5" rx="0" stroke="#5b5f64" stroke-width="1.2" fill="none"/><path d="M18 778 L24 772" stroke="#214a72" stroke-width="2" fill="none" /><rect x="8.5" y="797" width="10" height="9" rx="0" stroke="#214a72" stroke-width="1.3" fill="none"/><rect x="19" y="794" width="6" height="7" rx="0" stroke="#5b5f64" stroke-width="1.2" fill="none"/><circle cx="22" cy="806" r="2" stroke="#5b5f64" stroke-width="1.2" fill="none" /><path d="M9 826 V840 M16 826 V840 M24 826 V840 M9 826 H24 M9 840 H24" stroke="#5b5f64" stroke-width="1.2" fill="none" /><path d="M10 833 H15" stroke="#7a5628" stroke-width="1.2" fill="none" /><path d="M8 866 L12 862 L15 871 L19 856 L22 865 H26" stroke="#5b5f64" stroke-width="1.3" fill="none" /><path d="M12 862 L15 871" stroke="#214a72" stroke-width="1.3" fill="none" /><path d="M9 900 V888 H14 L16 890 H24 V893 M9 900 H18" stroke="#5b5f64" stroke-width="1.2" fill="none" /><path d="M17 899 H25" stroke="#7a5628" stroke-width="1.5" fill="none" /><rect x="9" y="920" width="16" height="13" rx="0" stroke="#5b5f64" stroke-width="1.2" fill="none"/><rect x="10" y="927" width="14" height="5" rx="0" fill="#214a72"/><path d="M14 925 L21 917" stroke="#7a5628" stroke-width="1.6" fill="none" /><path d="M10 963 L20 951 L25 955 L15 967 Z" stroke="#5b5f64" stroke-width="1.3" fill="none" /><path d="M8 971.7 H27" stroke="#1c2126" stroke-width="1" fill="none" /><path d="M22.76 987.62 L24.92 987.87 L24.92 990.13 L22.76 990.38 L22.05 992.09 L23.40 993.80 L21.80 995.40 L20.09 994.05 L18.38 994.76 L18.13 996.92 L15.87 996.92 L15.62 994.76 L13.91 994.05 L12.20 995.40 L10.60 993.80 L11.95 992.09 L11.24 990.38 L9.08 990.13 L9.08 987.87 L11.24 987.62 L11.95 985.91 L10.60 984.20 L12.20 982.60 L13.91 983.95 L15.62 983.24 L15.87 981.08 L18.13 981.08 L18.38 983.24 L20.09 983.95 L21.80 982.60 L23.40 984.20 L22.05 985.91 Z" fill="none" stroke="#5b5f64" stroke-width="1.3"/><circle cx="17" cy="989" r="2.8" stroke="#5b5f64" stroke-width="1.3" fill="none" /><circle cx="2462" cy="311.7" r="50.5" stroke="#262d33" stroke-width="15.4" fill="none" /><rect x="2451" y="250" width="23.5" height="124" rx="0" fill="#050d10"/><rect x="2398" y="299" width="128" height="25.5" rx="0" fill="#050d10"/><rect x="2436" y="285.6" width="52.3" height="51.6" rx="9" fill="#a9abae"/><rect x="2446" y="295" width="32" height="32" rx="3" fill="#b3b5b8"/><path d="M30 1322 V1377" stroke="#a6aaae" stroke-width="2" fill="none" /><path d="M35.5 1382.2 H90.6" stroke="#a6aaae" stroke-width="2" fill="none" /><rect x="25" y="1378" width="10" height="9.5" rx="1.5" stroke="#a6aaae" stroke-width="2" fill="none"/><path d="M1554.5 678 V807.5" stroke="#cfcfcf" stroke-width="1" fill="none" /><path d="M1489.4 742.8 H1619" stroke="#cfcfcf" stroke-width="1.4" fill="none" /><path d="M545.29 1394.03 L547.93 1394.42 L547.93 1397.98 L545.29 1398.37 L543.82 1400.90 L544.81 1403.39 L541.72 1405.17 L540.06 1403.08 L537.14 1403.08 L535.48 1405.17 L532.39 1403.39 L533.38 1400.90 L531.91 1398.37 L529.27 1397.98 L529.27 1394.42 L531.91 1394.03 L533.38 1391.50 L532.39 1389.01 L535.48 1387.23 L537.14 1389.32 L540.06 1389.32 L541.72 1387.23 L544.81 1389.01 L543.82 1391.50 Z" fill="#d8d8d8"/><circle cx="538.6" cy="1396.2" r="3" stroke="none" stroke-width="0" fill="#262a33" /><rect x="564" y="1387.5" width="20" height="18" rx="1" fill="#9c9ea2"/><rect x="565.5" y="1392" width="17" height="12" rx="0" fill="#707378"/><path d="M567.5 1394.5 L571 1397.5 L567.5 1400.5 M572 1401.5 H580" stroke="#d0d0d0" stroke-width="1.3" fill="none" /><path d="M2026.6 1401 L2032.8 1391.6 L2039 1401 Z" fill="#f2f2f2"/><path d="M20.5 1432.5 H38.5" stroke="#f2f2f2" stroke-width="1.4" fill="none" /><path d="M20.5 1429.5 L25 1422.5 L29.5 1429.5 Z" fill="#f2f2f2"/><path d="M31 1423 H38.5 M31 1428 H38.5" stroke="#bdbdbd" stroke-width="1.3" fill="none" /><path d="M242.2 1420 V1435" stroke="#353a40" stroke-width="1.2" fill="none" /><path d="M339 1420 V1435" stroke="#353a40" stroke-width="1.2" fill="none" /><path d="M388.3 1420 V1435" stroke="#353a40" stroke-width="1.2" fill="none" /><path d="M364 1420.5 V1433 M357.8 1426.8 H370.3" stroke="#f2f2f2" stroke-width="2" fill="none" /><path d="M1985 1419 V1435.5 H2002" stroke="#c8c8c8" stroke-width="1.5" fill="none" /><rect x="1989" y="1428" width="5.5" height="5" rx="0" stroke="#2f6fc8" stroke-width="1.3" fill="none"/><path d="M2028.5 1421.5 A8 8 0 1 0 2029 1433" stroke="#c8c8c8" stroke-width="1.6" fill="none" /><path d="M2023 1428 L2027.5 1421 L2030 1423.5 L2030.5 1428 Z" fill="#2f78c8"/><path d="M2052.5 1419.5 H2059.5 V1435.5 H2043.5 V1428" stroke="#c8c8c8" stroke-width="1.6" fill="none" /><circle cx="2046.6" cy="1422.8" r="3.2" stroke="#2f78c8" stroke-width="2.2" fill="#1c3d66" /><path d="M2071.5 1435.5 H2089 M2073 1434 L2088 1419.5" stroke="#c8c8c8" stroke-width="1.5" fill="none" /><circle cx="2080.5" cy="1427.5" r="3" stroke="#2f78c8" stroke-width="2" fill="#1c3d66" /><path d="M2102 1420 V1436 M2101 1434.5 H2119 M2102 1434 L2110 1427" stroke="#c8c8c8" stroke-width="1.3" fill="none" /><path d="M2114 1419 L2110.5 1425 H2114.5 L2111 1431" stroke="#e3a13c" stroke-width="1.5" fill="none" /><path d="M2135.5 1419.5 V1428 M2131 1423.5 H2140" stroke="#c8c8c8" stroke-width="1.5" fill="none" /><rect x="2135.5" y="1427.5" width="12.5" height="7" rx="0" stroke="#2f8be8" stroke-width="1.8" fill="none"/><path d="M2159 1420 H2177" stroke="#f2f2f2" stroke-width="1.5" fill="none" /><path d="M2159 1424.5 H2177" stroke="#f2f2f2" stroke-width="2" fill="none" /><path d="M2159 1429.5 H2177" stroke="#f2f2f2" stroke-width="2.5" fill="none" /><path d="M2159 1434.5 H2177" stroke="#f2f2f2" stroke-width="2.8" fill="none" /><rect x="2190" y="1419" width="15" height="16" rx="0" stroke="#c8c8c8" stroke-width="1.5" fill="#8ecaf6"/><path d="M2222.5 1419 V1427 M2218.5 1423 H2226.5" stroke="#c8c8c8" stroke-width="1.4" fill="none" /><rect x="2224" y="1427" width="6" height="5" rx="0" stroke="#c8c8c8" stroke-width="1.5" fill="none"/><rect x="2228" y="1430" width="7.5" height="6" rx="0" stroke="#2f8be8" stroke-width="1.6" fill="none"/><rect x="2246.5" y="1428.5" width="9" height="7" rx="1" fill="#f2f2f2"/><path d="M2255.5 1434 V1419" stroke="#c8c8c8" stroke-width="1.3" fill="none" /><rect x="2256" y="1418.8" width="8.2" height="6.5" rx="0" fill="#1a8cf0"/><rect x="2277" y="1419" width="14.5" height="13.5" rx="0" stroke="#c8c8c8" stroke-width="1.5" fill="none"/><text x="2284.3" y="1429.5" font-family="Liberation Sans" font-size="8" font-weight="bold" fill="#c8c8c8" text-anchor="middle">0.0</text><path d="M2396.7 1421.8 H2408.7000000000003 L2402.7 1429.0 Z" fill="#f2f2f2"/><path d="M2424 1433 L2429 1422 L2434 1433 Z M2421 1433 H2438 L2429 1424 Z" stroke="#2f8be8" stroke-width="1.5" fill="none" stroke-linejoin="round"/><path d="M2424 1419 L2421.5 1424 H2424.5 L2422 1428" stroke="#c8c8c8" stroke-width="1.3" fill="none" /><path d="M2455.5 1419.5 H2451 V1434 H2455" stroke="#c8c8c8" stroke-width="1.7" fill="none" /><circle cx="2461.5" cy="1422.5" r="3.5" stroke="#c8c8c8" stroke-width="1.6" fill="none" /><path d="M2461.5 1427.5 L2465 1431 L2461.5 1434.5 L2458 1431 Z" stroke="#2f8be8" stroke-width="1.5" fill="none" /><path d="M2493.83 1424.74 L2496.34 1425.11 L2496.34 1428.49 L2493.83 1428.86 L2492.45 1431.26 L2493.38 1433.61 L2490.46 1435.30 L2488.88 1433.31 L2486.12 1433.31 L2484.54 1435.30 L2481.62 1433.61 L2482.55 1431.26 L2481.17 1428.86 L2478.66 1428.49 L2478.66 1425.11 L2481.17 1424.74 L2482.55 1422.34 L2481.62 1419.99 L2484.54 1418.30 L2486.12 1420.29 L2488.88 1420.29 L2490.46 1418.30 L2493.38 1419.99 L2492.45 1422.34 Z" fill="none" stroke="#c8c8c8" stroke-width="1.6" stroke-linejoin="round"/><circle cx="2487.5" cy="1426.8" r="3" stroke="#c8c8c8" stroke-width="1.5" fill="none" /><path d="M2508.5 1419 L2515 1425.5 M2524.5 1419 L2518 1425.5 M2508.5 1434 L2515 1427.5 M2524.5 1434 L2518 1427.5" stroke="#c8c8c8" stroke-width="1.7" fill="none" /><path d="M2536.5 1426.5 L2540.5 1420 L2544.5 1426.5 Z" fill="#2f8be8"/><path d="M2545.5 1419.5 H2554.5 M2545.5 1426 H2554.5 M2536.5 1432 H2554.5" stroke="#2f8be8" stroke-width="1.5" fill="none" /></svg>
<div class="ob" style="left:760px;width:80px"></div><div class="ob" style="left:850px;width:60px"></div><div class="ob" style="left:920px;width:50px"></div><div class="ob" style="left:980px;width:40px"></div><div class="ob" style="left:1030px;width:60px"></div><div class="ob" style="left:1100px;width:100px"></div><div class="ob" style="left:1210px;width:120px"></div><div class="ob" style="left:1340px;width:150px"></div>
<span class="cc" style="left:590.35px;top:1385.17px;transform:scaleX(0.781);">E</span><span class="cc" style="left:600.35px;top:1385.17px;transform:scaleX(0.954);">n</span><span class="cc" style="left:611.75px;top:1385.17px;transform:scaleX(1.200);">t</span><span class="cc" style="left:620.35px;top:1385.17px;transform:scaleX(1.075);">e</span><span class="cc" style="left:631.10px;top:1385.17px;transform:scaleX(1.200);">r</span><span class="cc" style="left:650.35px;top:1385.17px;transform:scaleX(1.075);">a</span><span class="cc" style="left:660.35px;top:1385.17px;transform:scaleX(0.954);">n</span><span class="cc" style="left:680.35px;top:1385.17px;transform:scaleX(0.954);">o</span><span class="cc" style="left:690.35px;top:1385.17px;transform:scaleX(0.954);">p</span><span class="cc" style="left:701.75px;top:1385.17px;transform:scaleX(1.200);">t</span><span class="cc" style="left:711.75px;top:1385.17px;transform:scaleX(1.200);">i</span><span class="cc" style="left:720.35px;top:1385.17px;transform:scaleX(0.954);">o</span><span class="cc" style="left:730.35px;top:1385.17px;transform:scaleX(0.954);">n</span><span class="cc" style="left:751.10px;top:1385.17px;transform:scaleX(1.200);">[</span><span class="cc" style="left:760.35px;top:1385.17px;transform:scaleX(0.660);color:#559ade">D</span><span class="cc" style="left:771.75px;top:1385.17px;transform:scaleX(1.200);">i</span><span class="cc" style="left:780.45px;top:1385.17px;transform:scaleX(1.200);">s</span><span class="cc" style="left:791.75px;top:1385.17px;transform:scaleX(1.200);">t</span><span class="cc" style="left:800.35px;top:1385.17px;transform:scaleX(1.075);">a</span><span class="cc" style="left:810.35px;top:1385.17px;transform:scaleX(0.954);">n</span><span class="cc" style="left:820.35px;top:1385.17px;transform:scaleX(1.075);">c</span><span class="cc" style="left:830.35px;top:1385.17px;transform:scaleX(1.075);">e</span><span class="cc" style="left:850.35px;top:1385.17px;transform:scaleX(0.715);color:#559ade">R</span><span class="cc" style="left:860.35px;top:1385.17px;transform:scaleX(1.075);">a</span><span class="cc" style="left:870.35px;top:1385.17px;transform:scaleX(0.954);">d</span><span class="cc" style="left:881.75px;top:1385.17px;transform:scaleX(1.200);">i</span><span class="cc" style="left:890.35px;top:1385.17px;transform:scaleX(0.954);">u</span><span class="cc" style="left:900.45px;top:1385.17px;transform:scaleX(1.200);">s</span><span class="cc" style="left:920.35px;top:1385.17px;transform:scaleX(0.660);color:#559ade">A</span><span class="cc" style="left:930.35px;top:1385.17px;transform:scaleX(0.954);">n</span><span class="cc" style="left:940.35px;top:1385.17px;transform:scaleX(0.954);">g</span><span class="cc" style="left:951.75px;top:1385.17px;transform:scaleX(1.200);">l</span><span class="cc" style="left:960.35px;top:1385.17px;transform:scaleX(1.075);">e</span><span class="cc" style="left:980.35px;top:1385.17px;transform:scaleX(0.660);color:#559ade">A</span><span class="cc" style="left:990.35px;top:1385.17px;transform:scaleX(0.715);color:#559ade">R</span><span class="cc" style="left:1000.35px;top:1385.17px;transform:scaleX(1.075);">e</span><span class="cc" style="left:1010.35px;top:1385.17px;transform:scaleX(1.075);">a</span><span class="cc" style="left:1030.35px;top:1385.17px;transform:scaleX(0.660);color:#559ade">V</span><span class="cc" style="left:1040.35px;top:1385.17px;transform:scaleX(0.954);">o</span><span class="cc" style="left:1051.75px;top:1385.17px;transform:scaleX(1.200);">l</span><span class="cc" style="left:1060.35px;top:1385.17px;transform:scaleX(0.954);">u</span><span class="cc" style="left:1070.30px;top:1385.17px;transform:scaleX(0.620);">m</span><span class="cc" style="left:1080.35px;top:1385.17px;transform:scaleX(1.075);">e</span><span class="cc" style="left:1100.35px;top:1385.17px;transform:scaleX(0.781);color:#559ade">T</span><span class="cc" style="left:1110.35px;top:1385.17px;transform:scaleX(0.954);">o</span><span class="cc" style="left:1121.75px;top:1385.17px;transform:scaleX(1.200);">t</span><span class="cc" style="left:1130.35px;top:1385.17px;transform:scaleX(1.075);">a</span><span class="cc" style="left:1141.75px;top:1385.17px;transform:scaleX(1.200);">l</span><span class="cc" style="left:1160.35px;top:1385.17px;transform:scaleX(1.075);">a</span><span class="cc" style="left:1171.10px;top:1385.17px;transform:scaleX(1.200);">r</span><span class="cc" style="left:1180.35px;top:1385.17px;transform:scaleX(1.075);">e</span><span class="cc" style="left:1190.35px;top:1385.17px;transform:scaleX(1.075);">a</span><span class="cc" style="left:1211.75px;top:1385.17px;transform:scaleX(1.200);">t</span><span class="cc" style="left:1220.35px;top:1385.17px;transform:scaleX(0.954);">o</span><span class="cc" style="left:1231.75px;top:1385.17px;transform:scaleX(1.200);">t</span><span class="cc" style="left:1240.35px;top:1385.17px;transform:scaleX(1.075);">a</span><span class="cc" style="left:1251.75px;top:1385.17px;transform:scaleX(1.200);">l</span><span class="cc" style="left:1270.35px;top:1385.17px;transform:scaleX(0.781);color:#559ade">L</span><span class="cc" style="left:1280.35px;top:1385.17px;transform:scaleX(1.075);">e</span><span class="cc" style="left:1290.35px;top:1385.17px;transform:scaleX(0.954);">n</span><span class="cc" style="left:1300.35px;top:1385.17px;transform:scaleX(0.954);">g</span><span class="cc" style="left:1311.75px;top:1385.17px;transform:scaleX(1.200);">t</span><span class="cc" style="left:1320.35px;top:1385.17px;transform:scaleX(0.954);">h</span><span class="cc" style="left:1339.63px;top:1385.17px;transform:scaleX(0.620);color:#559ade">M</span><span class="cc" style="left:1350.35px;top:1385.17px;transform:scaleX(1.075);">a</span><span class="cc" style="left:1360.45px;top:1385.17px;transform:scaleX(1.200);">s</span><span class="cc" style="left:1370.45px;top:1385.17px;transform:scaleX(1.200);">s</span><span class="cc" style="left:1390.35px;top:1385.17px;transform:scaleX(0.954);">p</span><span class="cc" style="left:1401.10px;top:1385.17px;transform:scaleX(1.200);">r</span><span class="cc" style="left:1410.35px;top:1385.17px;transform:scaleX(0.954);">o</span><span class="cc" style="left:1420.35px;top:1385.17px;transform:scaleX(0.954);">p</span><span class="cc" style="left:1430.35px;top:1385.17px;transform:scaleX(1.075);">e</span><span class="cc" style="left:1441.10px;top:1385.17px;transform:scaleX(1.200);">r</span><span class="cc" style="left:1451.75px;top:1385.17px;transform:scaleX(1.200);">t</span><span class="cc" style="left:1461.75px;top:1385.17px;transform:scaleX(1.200);">i</span><span class="cc" style="left:1470.35px;top:1385.17px;transform:scaleX(1.075);">e</span><span class="cc" style="left:1480.45px;top:1385.17px;transform:scaleX(1.200);">s</span><span class="cc" style="left:1491.10px;top:1385.17px;transform:scaleX(1.200);">]</span><span class="cc" style="left:1510.35px;top:1385.17px;transform:scaleX(0.846);">&lt;</span><span class="cc" style="left:1519.96px;top:1385.17px;transform:scaleX(0.620);">%</span><span class="cc" style="left:1531.75px;top:1385.17px;transform:scaleX(1.200);">l</span><span class="cc" style="left:1540.45px;top:1385.17px;transform:scaleX(1.200);">s</span><span class="cc" style="left:1550.35px;top:1385.17px;transform:scaleX(0.846);">&gt;</span><span class="cc" style="left:1561.75px;top:1385.17px;transform:scaleX(1.200);">:</span><span class="cc" style="left:1580.35px;top:1385.17px;transform:scaleX(0.660);">D</span><span class="cc" style="left:1591.75px;top:1385.17px;transform:scaleX(1.200);">i</span><span class="cc" style="left:1600.45px;top:1385.17px;transform:scaleX(1.200);">s</span><span class="cc" style="left:1611.75px;top:1385.17px;transform:scaleX(1.200);">t</span><span class="cc" style="left:1620.35px;top:1385.17px;transform:scaleX(1.075);">a</span><span class="cc" style="left:1630.35px;top:1385.17px;transform:scaleX(0.954);">n</span><span class="cc" style="left:1640.35px;top:1385.17px;transform:scaleX(1.075);">c</span><span class="cc" style="left:1650.35px;top:1385.17px;transform:scaleX(1.075);">e</span>
<span class="t" style="left:51.25px;top:14.80px;font-size:15px;color:#d8dadc;transform:scaleX(1.0621);">ZWCAD 2027 Professional Edition</span>
<span class="t" style="left:662.00px;top:16.05px;font-size:15px;color:#d8dadc;transform:scaleX(1.1040);">2D Drafting &amp; Annota...</span>
<span class="t" style="left:894.94px;top:14.98px;font-size:15.5px;color:#2f8ae8;font-weight:bold;transform:scaleX(1.0602);">Home</span>
<span class="t" style="left:966.00px;top:14.98px;font-size:15.5px;color:#d4d6d8;transform:scaleX(1.1069);">Annotate</span>
<span class="t" style="left:1056.95px;top:14.98px;font-size:15.5px;color:#d4d6d8;transform:scaleX(1.0531);">Insert</span>
<span class="t" style="left:1122.95px;top:14.98px;font-size:15.5px;color:#d4d6d8;transform:scaleX(1.0514);">Parametric</span>
<span class="t" style="left:1226.00px;top:14.98px;font-size:15.5px;color:#d4d6d8;transform:scaleX(0.9924);">Views</span>
<span class="t" style="left:1292.50px;top:14.98px;font-size:15.5px;color:#d4d6d8;transform:scaleX(1.0841);">Tools</span>
<span class="t" style="left:1356.50px;top:14.98px;font-size:15.5px;color:#d4d6d8;transform:scaleX(1.0254);">Smart</span>
<span class="t" style="left:1423.92px;top:14.98px;font-size:15.5px;color:#d4d6d8;transform:scaleX(1.0755);">Manage</span>
<span class="t" style="left:1507.93px;top:14.98px;font-size:15.5px;color:#d4d6d8;transform:scaleX(1.0699);">Export</span>
<span class="t" style="left:1581.00px;top:14.98px;font-size:15.5px;color:#d4d6d8;transform:scaleX(1.0637);">Online</span>
<span class="t" style="left:1653.00px;top:14.98px;font-size:15.5px;color:#d4d6d8;transform:scaleX(1.0279);">GeoService</span>
<span class="t" style="left:1761.00px;top:14.98px;font-size:15.5px;color:#d4d6d8;transform:scaleX(0.9746);">APP+</span>
<span class="t" style="left:24.43px;top:102.08px;font-size:15.5px;color:#d3d5d7;transform:scaleX(1.0656);">Line</span>
<span class="t" style="left:75.43px;top:102.08px;font-size:15.5px;color:#d3d5d7;transform:scaleX(1.0691);">Polyline</span>
<span class="t" style="left:153.90px;top:102.08px;font-size:15.5px;color:#d3d5d7;transform:scaleX(1.0105);">Circle</span>
<span class="t" style="left:217.60px;top:102.08px;font-size:15.5px;color:#d3d5d7;transform:scaleX(1.0596);">Arc</span>
<span class="t" style="left:385.28px;top:103.08px;font-size:15.5px;color:#d3d5d7;transform:scaleX(1.1190);">Move</span>
<span class="t" style="left:441.61px;top:102.88px;font-size:15.5px;color:#d3d5d7;transform:scaleX(1.0852);">Rotate</span>
<span class="t" style="left:507.80px;top:102.88px;font-size:15.5px;color:#d3d5d7;transform:scaleX(1.0155);">Copy</span>
<span class="t" style="left:559.84px;top:102.88px;font-size:15.5px;color:#d3d5d7;transform:scaleX(1.1629);">Mirror</span>
<span class="t" style="left:892.26px;top:102.08px;font-size:15.5px;color:#d3d5d7;transform:scaleX(1.1424);">Multiline</span>
<span class="t" style="left:909.70px;top:121.38px;font-size:15.5px;color:#d3d5d7;transform:scaleX(1.0405);">Text</span>
<span class="t" style="left:980.64px;top:102.08px;font-size:15.5px;color:#d3d5d7;transform:scaleX(1.0558);">Dimension</span>
<span class="t" style="left:1073.70px;top:102.08px;font-size:15.5px;color:#d3d5d7;transform:scaleX(1.0512);">Table</span>
<span class="t" style="left:1261.99px;top:101.88px;font-size:15.5px;color:#d3d5d7;transform:scaleX(1.0103);">Layer</span>
<span class="t" style="left:1242.32px;top:122.28px;font-size:15.5px;color:#d3d5d7;transform:scaleX(1.0845);">Properties</span>
<span class="t" style="left:1632.76px;top:101.88px;font-size:15.5px;color:#d3d5d7;transform:scaleX(1.0401);">Insert</span>
<span class="t" style="left:1695.60px;top:101.48px;font-size:15.5px;color:#d3d5d7;transform:scaleX(1.0098);">Change</span>
<span class="t" style="left:1684.81px;top:122.28px;font-size:15.5px;color:#d3d5d7;transform:scaleX(0.9885);">Base Point</span>
<span class="t" style="left:2193.40px;top:101.78px;font-size:15.5px;color:#d3d5d7;">Paste</span>
<span class="t" style="left:2248.50px;top:103.28px;font-size:15.5px;color:#d3d5d7;transform:scaleX(1.0212);">Copy and Paste</span>
<span class="t" style="left:2275.00px;top:123.08px;font-size:15.5px;color:#d3d5d7;transform:scaleX(1.0452);">Settings</span>
<span class="t" style="left:2463.04px;top:103.28px;font-size:15.5px;color:#d3d5d7;transform:scaleX(0.9552);">Base</span>
<span class="t" style="left:2463.40px;top:123.08px;font-size:15.5px;color:#d3d5d7;transform:scaleX(0.9847);">View</span>
<span class="t" style="left:646.50px;top:55.28px;font-size:15.5px;color:#d3d5d7;transform:scaleX(1.0787);">Stretch</span>
<span class="t" style="left:648.00px;top:86.68px;font-size:15.5px;color:#d3d5d7;transform:scaleX(0.9698);">Scale</span>
<span class="t" style="left:647.60px;top:117.68px;font-size:15.5px;color:#d3d5d7;transform:scaleX(1.0441);">Offset</span>
<span class="t" style="left:743.00px;top:55.28px;font-size:15.5px;color:#d3d5d7;transform:scaleX(1.0848);">Trim</span>
<span class="t" style="left:741.95px;top:87.68px;font-size:15.5px;color:#d3d5d7;transform:scaleX(1.0488);">Fillet</span>
<span class="t" style="left:742.50px;top:120.28px;font-size:15.5px;color:#d3d5d7;transform:scaleX(1.0327);">Array</span>
<span class="t" style="left:1151.26px;top:56.08px;font-size:15.5px;color:#d3d5d7;transform:scaleX(1.0423);">Linear</span>
<span class="t" style="left:1151.26px;top:89.48px;font-size:15.5px;color:#d3d5d7;transform:scaleX(1.0382);">Leader</span>
<span class="t" style="left:1150.43px;top:121.38px;font-size:15.5px;color:#d3d5d7;transform:scaleX(1.0696);">Field</span>
<span class="t" style="left:1504.94px;top:58.88px;font-size:15.5px;color:#d3d5d7;transform:scaleX(1.0637);">Layer Match</span>
<span class="t" style="left:1504.95px;top:89.48px;font-size:15.5px;color:#d3d5d7;transform:scaleX(1.0514);">Make Current</span>
<span class="t" style="left:1428.60px;top:121.48px;font-size:15.5px;color:#d3d5d7;transform:scaleX(0.9333);">0</span>
<span class="t" style="left:1797.60px;top:58.28px;font-size:15.5px;color:#d3d5d7;transform:scaleX(1.0261);">Create</span>
<span class="t" style="left:1796.56px;top:88.58px;font-size:15.5px;color:#d3d5d7;transform:scaleX(1.0378);">Edit</span>
<span class="t" style="left:1795.91px;top:120.18px;font-size:15.5px;color:#d3d5d7;transform:scaleX(1.0928);">Define Attributes</span>
<span class="t" style="left:2004.00px;top:58.28px;font-size:15.5px;color:#d3d5d7;transform:scaleX(0.9964);">ByLayer</span>
<span class="t" style="left:2061.49px;top:89.78px;font-size:15.5px;color:#d3d5d7;transform:scaleX(1.0108);">ByLayer</span>
<span class="t" style="left:2061.49px;top:120.78px;font-size:15.5px;color:#d3d5d7;transform:scaleX(1.0108);">ByLayer</span>
<span class="t" style="left:161.03px;top:152.18px;font-size:15.5px;color:#cfd1d3;transform:scaleX(0.9729);">Draw</span>
<span class="t" style="left:586.15px;top:152.18px;font-size:15.5px;color:#cfd1d3;transform:scaleX(1.1469);">Modify</span>
<span class="t" style="left:1002.00px;top:152.18px;font-size:15.5px;color:#cfd1d3;transform:scaleX(1.1157);">Annotation</span>
<span class="t" style="left:1393.01px;top:152.18px;font-size:15.5px;color:#cfd1d3;transform:scaleX(0.9940);">Layers</span>
<span class="t" style="left:1756.46px;top:152.18px;font-size:15.5px;color:#cfd1d3;transform:scaleX(1.0417);">Block</span>
<span class="t" style="left:2001.53px;top:152.18px;font-size:15.5px;color:#cfd1d3;transform:scaleX(1.0673);">Properties</span>
<span class="t" style="left:2255.30px;top:152.18px;font-size:15.5px;color:#cfd1d3;transform:scaleX(1.0909);">Clipboard</span>
<span class="t" style="left:2411.24px;top:152.18px;font-size:15.5px;color:#cfd1d3;transform:scaleX(1.0596);">Drawing View</span>
<span class="t" style="left:46.78px;top:182.85px;font-size:16px;color:#f0f0f0;font-weight:bold;transform:scaleX(1.0152);">Drawing1*</span>
<span class="t" style="left:5.02px;top:218.65px;font-size:16px;color:#a9adb1;transform:scaleX(0.9810);">[—]</span>
<span class="t" style="left:34.90px;top:218.65px;font-size:16px;color:#a9adb1;transform:scaleX(1.1010);">[Top]</span>
<span class="t" style="left:78.74px;top:218.65px;font-size:16px;color:#a9adb1;transform:scaleX(0.9553);">[2D</span>
<span class="t" style="left:108.70px;top:218.65px;font-size:16px;color:#dadcde;transform:scaleX(0.9938);">Wireframe]</span>
<span class="t" style="left:192.57px;top:218.65px;font-size:16px;color:#a9adb1;transform:scaleX(0.9314);">[WCS]</span>
<span class="t" style="left:76.95px;top:1418.75px;font-size:16px;color:#f0f0f0;font-weight:bold;transform:scaleX(1.0497);">Model</span>
<span class="t" style="left:163.81px;top:1419.55px;font-size:16px;color:#dcdcdc;transform:scaleX(0.9904);">Layout1</span>
<span class="t" style="left:260.70px;top:1419.55px;font-size:16px;color:#dcdcdc;transform:scaleX(1.0047);">Layout2</span>
<span class="t" style="left:2297.60px;top:1421.77px;font-size:14px;color:#b8b8b8;font-family:'Liberation Mono';transform:scaleX(0.9336);">Millimeters</span>
<span class="t" style="left:558.00px;top:1351.53px;font-size:20.5px;color:#c4c4c4;font-family:'Liberation Serif';transform:scaleX(0.6971);-webkit-text-stroke:0;">MEASUREGEOM</span>
<span class="t" style="left:2454.70px;top:253.41px;font-size:17px;color:#8c939a;transform:scaleX(1.3000);">N</span>
<span class="t" style="left:2457.00px;top:355.01px;font-size:17px;color:#8c939a;transform:scaleX(0.9091);">S</span>
<span class="t" style="left:2402.00px;top:304.51px;font-size:17px;color:#8c939a;transform:scaleX(1.1250);">W</span>
<span class="t" style="left:2508.51px;top:304.51px;font-size:17px;color:#8c939a;transform:scaleX(0.8900);">E</span>
<span class="t" style="left:2454.50px;top:307.88px;font-size:9px;color:#5a5c60;font-weight:bold;transform:scaleX(0.8181);">TOP</span>
<span class="t" style="left:38.40px;top:1321.15px;font-size:16px;color:#a6aaae;transform:scaleX(0.8818);">Y</span>
<span class="t" style="left:79.70px;top:1361.75px;font-size:16px;color:#a6aaae;transform:scaleX(0.8818);">X</span>
</body></html>
